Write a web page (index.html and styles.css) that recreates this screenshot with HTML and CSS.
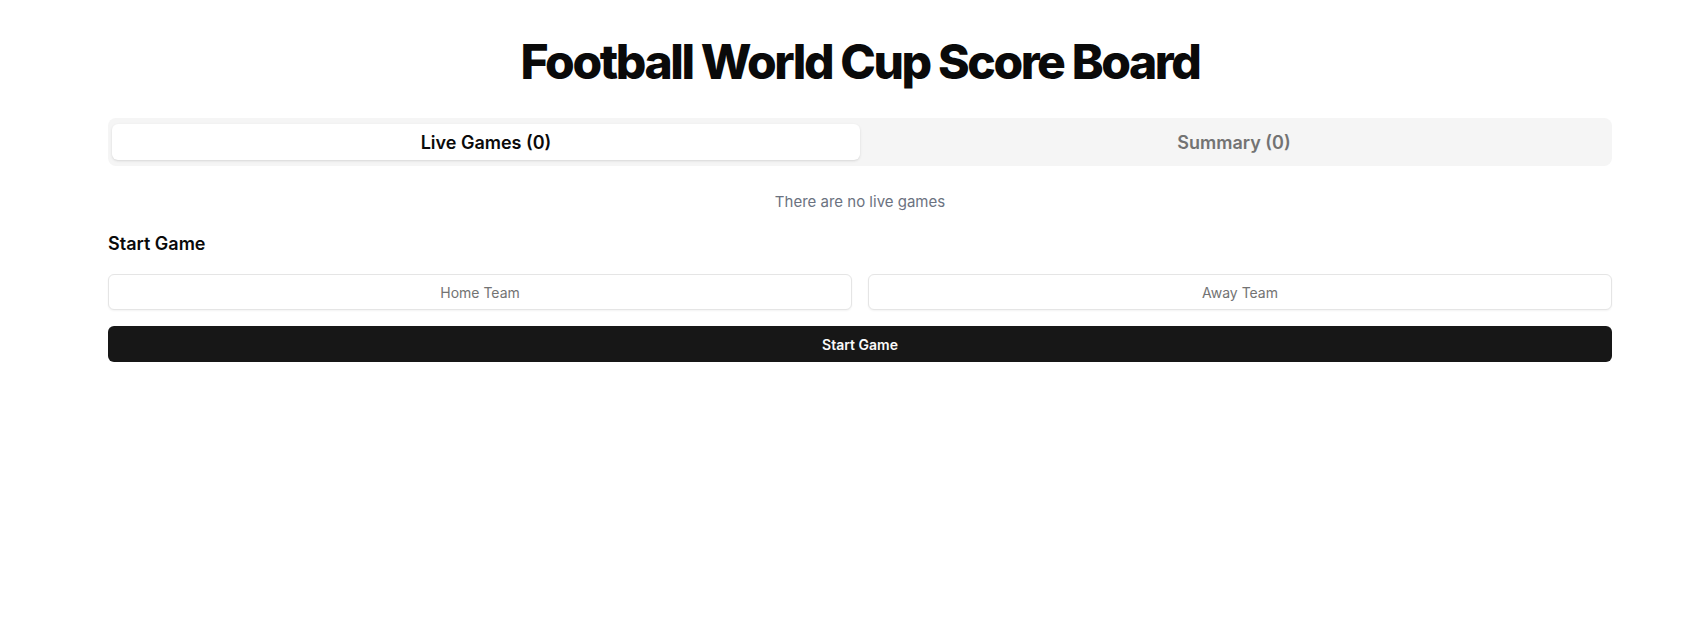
FILE: index.html
```html
<!DOCTYPE html>
<html lang="en">
<head>
<meta charset="utf-8">
<title>Football World Cup Score Board</title>
<link rel="stylesheet" href="styles.css">
</head>
<body>
<main class="page">
  <h1 class="title">Football World Cup Score Board</h1>
  <div class="tabs">
    <button class="tab tab-active">Live Games (0)</button>
    <button class="tab">Summary (0)</button>
  </div>
  <p class="empty">There are no live games</p>
  <section class="start">
    <h2 class="start-title">Start Game</h2>
    <div class="fields">
      <input class="field" type="text" placeholder="Home Team">
      <input class="field" type="text" placeholder="Away Team">
    </div>
    <button class="start-btn">Start Game</button>
  </section>
</main>
</body>
</html>
```

FILE: styles.css
```css
* { box-sizing: border-box; }
html, body { margin: 0; padding: 0; background: #ffffff; }
body {
  font-family: Inter, "Noto Sans", sans-serif;
  color: #0a0a0a;
  padding-left: 12px;
}
.page {
  max-width: 1504px;
  margin: 0 auto;
  padding-top: 38px;
}
.title {
  margin: 0;
  font-size: 48px;
  line-height: 48px;
  font-weight: 800;
  letter-spacing: -0.05em;
  text-align: center;
  color: #0a0a0a;
}
.tabs {
  margin-top: 32px;
  display: grid;
  grid-template-columns: 1fr 1fr;
  padding: 6px 4px;
  background: #f5f5f5;
  border-radius: 8px;
  height: 48px;
}
.tab {
  font-family: inherit;
  font-size: 18px;
  font-weight: 600;
  color: #737373;
  background: transparent;
  border: 0;
  border-radius: 6px;
  padding: 0;
  height: 36px;
  cursor: pointer;
}
.tab-active {
  background: #ffffff;
  color: #0a0a0a;
  box-shadow: 0 1px 3px rgba(0,0,0,0.1), 0 1px 2px -1px rgba(0,0,0,0.1);
}
.empty {
  margin: 24px 0 0;
  text-align: center;
  font-size: 15px;
  line-height: 24px;
  color: #6b7280;
}
.start { margin-top: 16px; }
.start-title {
  margin: 0;
  font-size: 18px;
  line-height: 28px;
  font-weight: 600;
  color: #0a0a0a;
}
.fields {
  margin-top: 16px;
  display: grid;
  grid-template-columns: 1fr 1fr;
  gap: 16px;
}
.field {
  height: 36px;
  border: 1px solid #e5e5e5;
  border-radius: 6px;
  background: #ffffff;
  box-shadow: 0 1px 2px rgba(0,0,0,0.05);
  font-family: inherit;
  font-size: 14px;
  text-align: center;
  color: #0a0a0a;
  padding: 0 12px;
}
.field::placeholder { color: #737373; }
.start-btn {
  margin-top: 16px;
  width: 100%;
  height: 36px;
  border: 0;
  border-radius: 6px;
  background: #171717;
  color: #fafafa;
  font-family: inherit;
  font-size: 14px;
  font-weight: 600;
  cursor: pointer;
}
```
